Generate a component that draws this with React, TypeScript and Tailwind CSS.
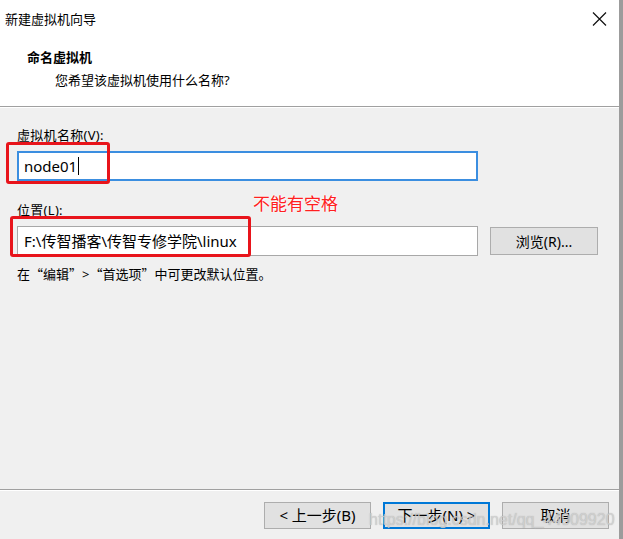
import React from "react";

const font = { fontFamily: '"Noto Sans", "Noto Sans CJK SC", sans-serif' };
const cjk = { fontFamily: '"Noto Sans CJK SC", sans-serif' };

export default function App() {
  return (
    <div lang="zh-CN" className="w-[623px] h-[539px] flex bg-[#f0f0f0] overflow-hidden relative" style={font}>
      <div className="w-[619px] h-full flex flex-col text-black">
        {/* Header */}
        <div className="bg-white">
          <div className="h-[38px] flex items-center justify-between pl-[5px] pr-[12px]">
            <span className="text-[13px] leading-[19px]">新建虚拟机向导</span>
            <svg width="15" height="14" viewBox="0 0 15 14" className="mt-[-1px]">
              <path d="M1 0.5 L14 13.5 M14 0.5 L1 13.5" stroke="#111" strokeWidth="1.2" />
            </svg>
          </div>
          <div className="pt-[10px] pb-[16px] pl-[27px]">
            <div className="text-[13px] leading-[19px] font-bold">命名虚拟机</div>
            <div className="text-[13px] leading-[19px] mt-[4px] pl-[28px]">您希望该虚拟机使用什么名称?</div>
          </div>
        </div>
        <div className="h-px bg-[#a0a0a0]" />
        <div className="h-px bg-white" />

        {/* Body */}
        <div className="flex-1 pl-[17px] pt-[18px] relative">
          <div className="text-[13px] leading-[19px] tracking-[0.3px]">虚拟机名称(V):</div>
          <div className="relative mt-[6px] w-[461px] h-[30px] bg-white border-2 border-[#3b8ee0] flex items-center pl-[5px]">
            <span className="text-[15px] leading-[20px]">node01</span>
            <span className="w-px h-[18px] bg-black ml-[1px]" />
            <div className="absolute left-[-13px] top-[-11px] w-[104px] h-[42px] border-[3px] border-[#e8141b] rounded-[3px]" />
          </div>

          <div className="text-[13px] leading-[19px] mt-[20px] relative tracking-[0.3px]">
            位置(L):
            <span className="absolute left-[236px] top-[-7px] text-[17px] leading-[20px] tracking-normal text-[#ff2020] [text-shadow:0_0_2px_#fff,0_0_2px_#fff]">
              不能有空格
            </span>
          </div>
          <div className="mt-[6px] flex items-center gap-[12px]">
            <div className="relative w-[461px] h-[30px] bg-white border border-[#a8a8a8] flex items-center pl-[6px]">
              <span className="text-[15px] leading-[20px]">F:\传智播客\传智专修学院\linux</span>
              <div className="absolute left-[-8px] top-[-11px] w-[241px] h-[41px] border-[3px] border-[#e8141b] rounded-[3px]" />
            </div>
            <div className="w-[108px] h-[28px] bg-[#e1e1e1] border border-[#adadad] flex items-center justify-center text-[14px]">
              浏览(R)...
            </div>
          </div>
          <div className="text-[13px] leading-[19px] mt-[8px]">
            在<span style={cjk}>“</span>编辑<span style={cjk}>”</span>&gt;<span style={cjk}>“</span>首选项<span style={cjk}>”</span>中可更改默认位置。
          </div>
        </div>

        <div className="h-px bg-[#a0a0a0]" />
        <div className="h-px bg-white" />

        {/* Footer */}
        <div className="h-[48px] flex justify-end gap-[12px] pr-[10px] pt-[11px]">
          <div className="w-[107px] h-[27px] bg-[#e1e1e1] border border-[#adadad] flex items-center justify-center text-[15px]">
            &lt; 上一步(B)
          </div>
          <div className="w-[107px] h-[27px] bg-[#e1e1e1] border-2 border-[#0078d7] flex items-center justify-center text-[15px]">
            下一步(N) &gt;
          </div>
          <div className="w-[107px] h-[27px] bg-[#e1e1e1] border border-[#adadad] flex items-center justify-center text-[15px]">
            取消
          </div>
        </div>
      </div>
      <div className="w-[4px] h-full bg-[#9c9c9c]" />

      <div
        className="absolute left-[369px] top-[509px] text-[16px] leading-[22px] text-[rgba(215,215,215,0.75)] [text-shadow:0_0_1px_rgba(120,120,120,0.5)]"
        style={{ fontFamily: '"Liberation Sans", Arial, sans-serif' }}
      >
        https://blog.csdn.net/qq_44909920
      </div>
    </div>
  );
}
